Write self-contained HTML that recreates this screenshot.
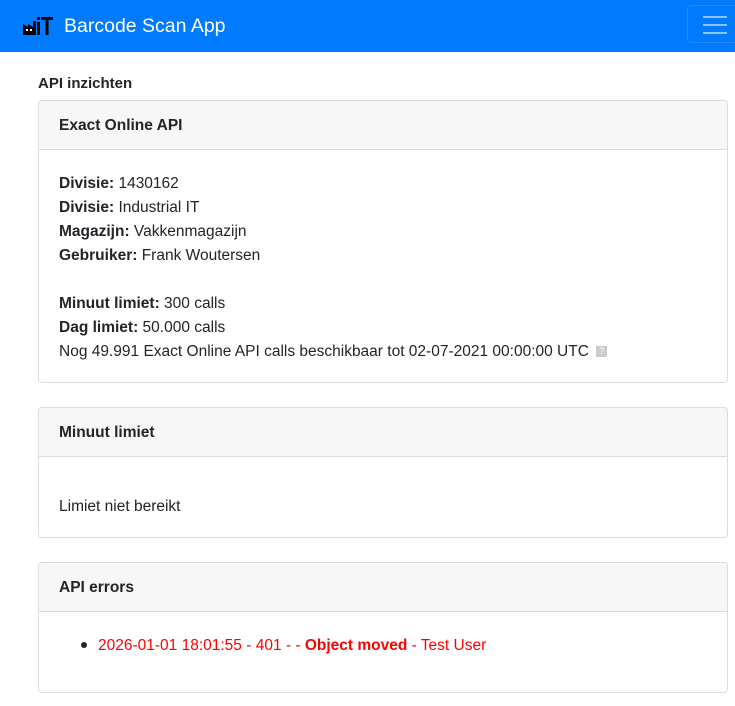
<!DOCTYPE html>
<html><head><style>
body{margin:0;background:#fff;font-family:"Liberation Sans",sans-serif;color:#212529;font-size:15.5px;width:735px;height:706px;overflow:hidden;position:relative}
.nav{position:absolute;left:0;top:0;width:735px;height:52px;background:#007bff}
.brand{position:absolute;left:64px;top:15px;color:#fff;font-size:19.5px}
.tog{position:absolute;left:687px;top:5px;width:60px;height:38px;border:1px solid rgba(255,255,255,.12);border-radius:4px;box-sizing:border-box}
.tog i{position:absolute;left:15px;width:24px;height:2px;background:rgba(255,255,255,.55)}
.title{position:absolute;left:38px;top:75px;font-weight:bold;font-size:15px}
.card{position:absolute;left:38px;width:690px;border:1px solid #dcdcdc;border-radius:4px;box-sizing:border-box;overflow:hidden}
.hd{height:49px;background:#f7f7f7;border-bottom:1px solid #dcdcdc;box-sizing:border-box;padding-left:20px;line-height:50px;font-weight:bold}
.bd{padding:0 20px;line-height:24px}
.q{display:inline-block;width:11px;height:11px;background:#ccc;color:#fff;font-size:9px;line-height:11px;text-align:center;vertical-align:middle;margin-left:3px}
.red{color:#f00}
</style></head><body>
<div class="nav">
<svg style="position:absolute;left:22px;top:16px" width="32" height="20" viewBox="0 0 32 20">
<path d="M1 19V8l5 3V8l5 3V5h3v14z" fill="#000"/>
<rect x="4" y="13" width="2" height="2" fill="#fff"/><rect x="8" y="13" width="2" height="2" fill="#fff"/>
<rect x="15" y="6" width="3" height="13" fill="#000"/><rect x="15" y="1" width="3" height="3" fill="#000"/>
<rect x="19" y="1" width="12" height="3" fill="#000"/><rect x="23.5" y="1" width="3" height="18" fill="#000"/>
</svg>
<div class="brand">Barcode Scan App</div>
<div class="tog"><i style="top:10px"></i><i style="top:18px"></i><i style="top:26px"></i></div>
</div>
<div class="title">API inzichten</div>
<div class="card" style="top:100px;height:283px">
<div class="hd">Exact Online API</div>
<div class="bd" style="padding-top:22px">
<b>Divisie:</b> 1430162<br><b>Divisie:</b> Industrial IT<br><b>Magazijn:</b> Vakkenmagazijn<br><b>Gebruiker:</b> Frank Woutersen<br><br>
<b>Minuut limiet:</b> 300 calls<br><b>Dag limiet:</b> 50.000 calls<br>Nog 49.991 Exact Online API calls beschikbaar tot 02-07-2021 00:00:00 UTC <span class="q">?</span>
</div></div>
<div class="card" style="top:407px;height:131px">
<div class="hd">Minuut limiet</div>
<div class="bd" style="padding-top:38px">Limiet niet bereikt</div></div>
<div class="card" style="top:562px;height:131px">
<div class="hd">API errors</div>
<div class="bd" style="padding-top:22px;padding-left:59px;position:relative"><span style="position:absolute;left:42px;top:30px;width:6px;height:6px;border-radius:50%;background:#212529"></span><span class="red">2026-01-01 18:01:55 - 401 - - <b>Object moved</b> - Test User</span></div></div>
</body></html>
